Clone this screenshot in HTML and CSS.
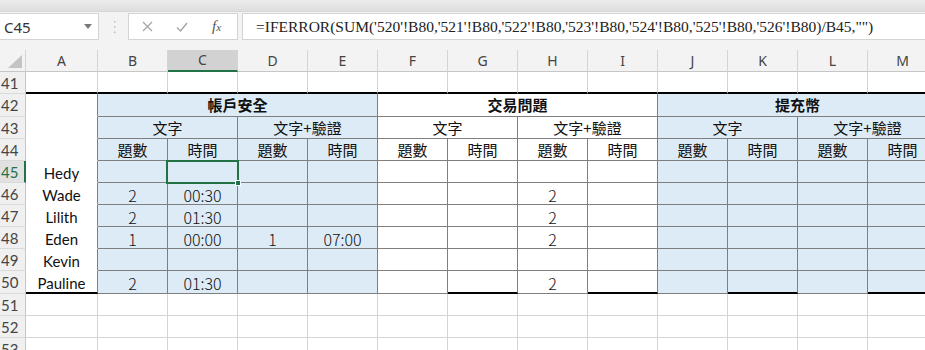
FILE: index.html
```html
<!DOCTYPE html>
<html lang="zh-Hant">
<head>
    <meta charset="UTF-8">
    <title>Sheet</title>
    <link rel="stylesheet" href="styles.css">
</head>
<body>
    <!-- Formula bar -->
    <div class="toolbar">
        <div class="strip"></div>
        <div class="fbar">
            <div class="namebox">
                <span>C45</span>
                <svg class="caret" width="8" height="5" viewBox="0 0 8 5"><path d="M0 0h8L4 5z" fill="#7a7a7a"/></svg>
            </div>
            <svg class="grip" width="3" height="14" viewBox="0 0 3 14">
                <rect x="1" y="1" width="1.4" height="1.4" fill="#b4b4b4"/>
                <rect x="1" y="6.3" width="1.4" height="1.4" fill="#b4b4b4"/>
                <rect x="1" y="11.6" width="1.4" height="1.4" fill="#b4b4b4"/>
            </svg>
            <div class="btns">
                <svg class="btn-x" width="11" height="11" viewBox="0 0 11 11"><path d="M1 1l9 9M10 1l-9 9" stroke="#a6a6a6" stroke-width="1.3" fill="none"/></svg>
                <svg class="btn-ok" width="12" height="10" viewBox="0 0 12 10"><path d="M1 5.5l3.5 3.5L11 1" stroke="#a6a6a6" stroke-width="1.4" fill="none"/></svg>
                <span class="fx">f<small>x</small></span>
            </div>
            <div class="formula">=IFERROR(SUM('520'!B80,'521'!B80,'522'!B80,'523'!B80,'524'!B80,'525'!B80,'526'!B80)/B45,"")</div>
        </div>
    </div>

    <!-- Grid -->
    <div class="sheet">
        <div class="row colhdr">
            <div class="corner"><svg width="14" height="13" viewBox="0 0 14 13"><path d="M14 0v13H0z" fill="#c4c4c4"/></svg></div>
            <div class="ch">A</div>
            <div class="ch">B</div>
            <div class="ch sel">C</div>
            <div class="ch">D</div>
            <div class="ch">E</div>
            <div class="ch">F</div>
            <div class="ch">G</div>
            <div class="ch">H</div>
            <div class="ch">I</div>
            <div class="ch">J</div>
            <div class="ch">K</div>
            <div class="ch">L</div>
            <div class="ch">M</div>
        </div>

        <div class="row">
            <div class="rh">41</div>
            <div class="c top"></div><div class="c top"></div><div class="c top"></div><div class="c top"></div>
            <div class="c top"></div><div class="c top"></div><div class="c top"></div><div class="c top"></div>
            <div class="c top"></div><div class="c top"></div><div class="c top"></div><div class="c top"></div>
            <div class="c top"></div>
        </div>

        <div class="row tall">
            <div class="rh">42</div>
            <div class="c a"></div>
            <div class="c g blue hd span4">帳戶安全</div>
            <div class="c g hd span4">交易問題</div>
            <div class="c g blue hd span4">提充幣</div>
        </div>

        <div class="row">
            <div class="rh">43</div>
            <div class="c a"></div>
            <div class="c g blue span2">文字</div>
            <div class="c g blue span2">文字+驗證</div>
            <div class="c g span2">文字</div>
            <div class="c g span2">文字+驗證</div>
            <div class="c g blue span2">文字</div>
            <div class="c g blue span2">文字+驗證</div>
        </div>

        <div class="row">
            <div class="rh">44</div>
            <div class="c a"></div>
            <div class="c g blue">題數</div><div class="c g blue">時間</div>
            <div class="c g blue">題數</div><div class="c g blue">時間</div>
            <div class="c g">題數</div><div class="c g">時間</div>
            <div class="c g">題數</div><div class="c g">時間</div>
            <div class="c g blue">題數</div><div class="c g blue">時間</div>
            <div class="c g blue">題數</div><div class="c g blue">時間</div>
        </div>

        <div class="row">
            <div class="rh sel">45</div>
            <div class="c a name">Hedy</div>
            <div class="c g blue"></div>
            <div class="c g blue cur"><span class="cur-box"></span><span class="handle"></span></div>
            <div class="c g blue"></div><div class="c g blue"></div>
            <div class="c g"></div><div class="c g"></div><div class="c g"></div><div class="c g"></div>
            <div class="c g blue"></div><div class="c g blue"></div><div class="c g blue"></div><div class="c g blue"></div>
        </div>

        <div class="row">
            <div class="rh">46</div>
            <div class="c a name">Wade</div>
            <div class="c g blue num">2</div><div class="c g blue num">00:30</div>
            <div class="c g blue"></div><div class="c g blue"></div>
            <div class="c g"></div><div class="c g"></div><div class="c g num">2</div><div class="c g"></div>
            <div class="c g blue"></div><div class="c g blue"></div><div class="c g blue"></div><div class="c g blue"></div>
        </div>

        <div class="row">
            <div class="rh">47</div>
            <div class="c a name">Lilith</div>
            <div class="c g blue num">2</div><div class="c g blue num">01:30</div>
            <div class="c g blue"></div><div class="c g blue"></div>
            <div class="c g"></div><div class="c g"></div><div class="c g num">2</div><div class="c g"></div>
            <div class="c g blue"></div><div class="c g blue"></div><div class="c g blue"></div><div class="c g blue"></div>
        </div>

        <div class="row">
            <div class="rh">48</div>
            <div class="c a name">Eden</div>
            <div class="c g blue num">1</div><div class="c g blue num">00:00</div>
            <div class="c g blue num">1</div><div class="c g blue num">07:00</div>
            <div class="c g"></div><div class="c g"></div><div class="c g num">2</div><div class="c g"></div>
            <div class="c g blue"></div><div class="c g blue"></div><div class="c g blue"></div><div class="c g blue"></div>
        </div>

        <div class="row">
            <div class="rh">49</div>
            <div class="c a name">Kevin</div>
            <div class="c g blue"></div><div class="c g blue"></div>
            <div class="c g blue"></div><div class="c g blue"></div>
            <div class="c g"></div><div class="c g"></div><div class="c g"></div><div class="c g"></div>
            <div class="c g blue"></div><div class="c g blue"></div><div class="c g blue"></div><div class="c g blue"></div>
        </div>

        <div class="row tall">
            <div class="rh">50</div>
            <div class="c a name end">Pauline</div>
            <div class="c g blue num">2</div><div class="c g blue num">01:30</div>
            <div class="c g blue"></div><div class="c g blue"></div>
            <div class="c g"></div><div class="c g end"></div><div class="c g num">2</div><div class="c g end"></div>
            <div class="c g blue"></div><div class="c g blue end"></div><div class="c g blue"></div><div class="c g blue end"></div>
        </div>

        <div class="row">
            <div class="rh">51</div>
            <div class="c"></div><div class="c"></div><div class="c"></div><div class="c"></div>
            <div class="c"></div><div class="c"></div><div class="c"></div><div class="c"></div>
            <div class="c"></div><div class="c"></div><div class="c"></div><div class="c"></div>
            <div class="c"></div>
        </div>

        <div class="row">
            <div class="rh">52</div>
            <div class="c"></div><div class="c"></div><div class="c"></div><div class="c"></div>
            <div class="c"></div><div class="c"></div><div class="c"></div><div class="c"></div>
            <div class="c"></div><div class="c"></div><div class="c"></div><div class="c"></div>
            <div class="c"></div>
        </div>

        <div class="row">
            <div class="rh">53</div>
            <div class="c"></div><div class="c"></div><div class="c"></div><div class="c"></div>
            <div class="c"></div><div class="c"></div><div class="c"></div><div class="c"></div>
            <div class="c"></div><div class="c"></div><div class="c"></div><div class="c"></div>
            <div class="c"></div>
        </div>
    </div>
</body>
</html>
```

FILE: styles.css
```css
* {
    box-sizing: border-box;
}

body {
    margin: 0;
    width: 925px;
    height: 350px;
    overflow: hidden;
    background: #fff;
    font-family: "Noto Sans CJK TC", sans-serif;
}

/* Formula bar */
.toolbar {
    height: 50px;
    background: #f3f3f3;
}

.strip {
    height: 12px;
    background: linear-gradient(#ececec, #dedede);
    border-bottom: 1px solid #d8d8d8;
}

.fbar {
    display: flex;
    align-items: center;
    height: 27px;
    margin-top: 1px;
}

.namebox {
    width: 99px;
    height: 27px;
    background: #fff;
    border: 1px solid #d4d4d4;
    border-left: 0;
    display: flex;
    align-items: center;
    justify-content: space-between;
    padding: 0 6px 0 4px;
    font-family: "Noto Sans", sans-serif;
    font-size: 15px;
    color: #333;
}

.grip {
    margin-left: 14px;
}

.btns {
    margin-left: 12px;
    width: 110px;
    height: 27px;
    background: #fff;
    border: 1px solid #d4d4d4;
    display: flex;
    align-items: center;
}

.btn-x {
    margin-left: 13px;
}

.btn-ok {
    margin-left: 23px;
}

.fx {
    margin-left: 24px;
    font-family: "Liberation Serif", serif;
    font-style: italic;
    font-size: 15px;
    color: #555;
}

.fx small {
    font-size: 11px;
}

.formula {
    flex: 1;
    margin-left: 4px;
    height: 27px;
    background: #fff;
    border: 1px solid #d4d4d4;
    border-right: 0;
    padding-left: 13px;
    font-family: "Liberation Serif", serif;
    font-size: 15.5px;
    line-height: 25px;
    color: #222;
    white-space: nowrap;
    overflow: hidden;
}

/* Sheet grid */
.row {
    display: grid;
    grid-template-columns: 26px 72px repeat(12, 70px);
    grid-template-rows: 22px;
    height: 22px;
}

.row.tall {
    grid-template-rows: 23px;
    height: 23px;
}

.corner {
    background: #f3f3f3;
    border-right: 1px solid #d4d4d4;
    border-bottom: 1px solid #c6c6c6;
    display: flex;
    align-items: flex-end;
    justify-content: flex-end;
    padding: 0 3px 3px 0;
}

.ch {
    background: #f3f3f3;
    border-right: 1px solid #d4d4d4;
    border-bottom: 1px solid #c6c6c6;
    display: flex;
    align-items: center;
    justify-content: center;
    font-family: "Noto Sans", sans-serif;
    font-size: 14px;
    line-height: 18px;
    color: #444;
}

.ch.sel {
    background: #d2d2d2;
    border-bottom: 2px solid #217346;
}

.rh {
    background: #f0f0f0;
    border-right: 1px solid #c6c6c6;
    border-bottom: 1px solid #dadada;
    display: flex;
    align-items: center;
    padding-left: 1px;
    font-family: Lato, sans-serif;
    font-size: 15px;
    line-height: 18px;
    color: #444;
}

.rh.sel {
    background: #e1e1e1;
    border-right: 2px solid #217346;
    color: #217346;
}

.c {
    overflow: hidden;
    border-right: 1px solid #d4d4d4;
    border-bottom: 1px solid #d4d4d4;
    display: flex;
    align-items: center;
    justify-content: center;
    font-size: 15px;
    line-height: 18px;
    color: #111;
    white-space: nowrap;
}

.c.top {
    border-bottom: 2px solid #000;
}

.c.a {
    border-right-color: #7f7f7f;
    border-bottom-color: transparent;
}

.c.g {
    border-right-color: #7f7f7f;
    border-bottom-color: #7f7f7f;
}

.blue {
    background: #ddebf7;
}

.hd {
    font-weight: 700;
}

.span2 {
    grid-column: span 2;
}

.span4 {
    grid-column: span 4;
}

.name {
    font-family: Lato, "Noto Sans CJK TC", sans-serif;
    font-size: 15px;
    padding-top: 2px;
}

.num {
    font-size: 16px;
    font-weight: 300;
    padding-top: 2px;
}

.c.end {
    border-bottom: 2px solid #000;
}

/* Active cell */
.cur {
    position: relative;
    overflow: visible;
}

.cur-box {
    position: absolute;
    left: -2px;
    top: -1px;
    right: -2px;
    bottom: -2px;
    border: 2px solid #217346;
}

.handle {
    position: absolute;
    right: -4px;
    bottom: -4px;
    width: 6px;
    height: 6px;
    background: #217346;
    border: 1px solid #fff;
}
```
